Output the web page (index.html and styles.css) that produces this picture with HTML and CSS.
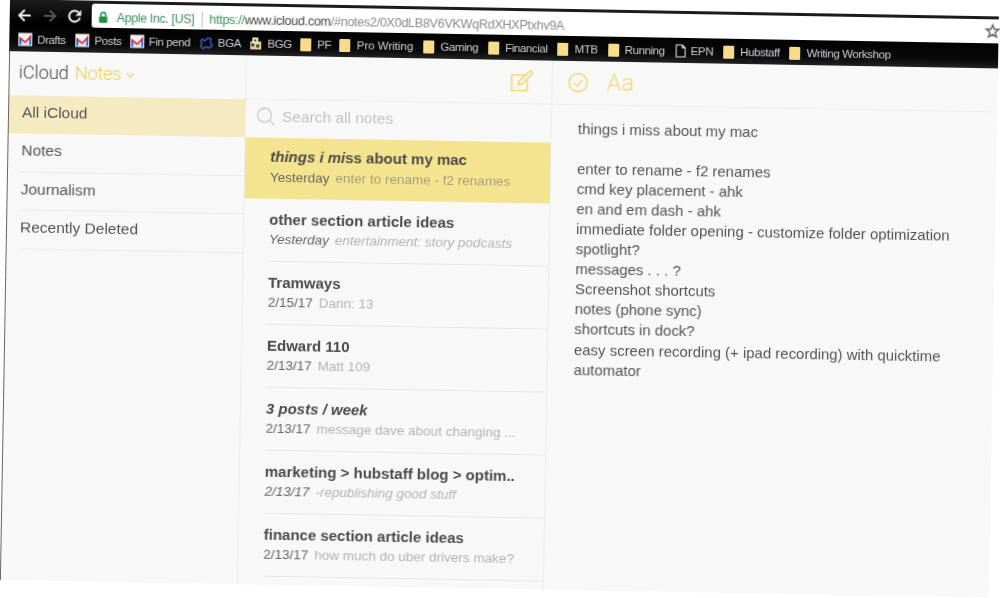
FILE: index.html
```html
<!DOCTYPE html>
<html lang="en">
<head>
<meta charset="utf-8">
<title>iCloud Notes</title>
<link rel="stylesheet" href="styles.css">
</head>
<body>
<div class="window">
  <header class="chrome">
    <div class="toolbar">
      <nav class="navbtns">
        <svg class="nav" viewBox="0 0 16 16"><path d="M14 8H3M8 2.500 2.500 8 8 13.500" fill="none" stroke="#eee" stroke-width="2"/></svg>
        <svg class="nav" viewBox="0 0 16 16"><path d="M2 8h11M8 2.500 13.500 8 8 13.500" fill="none" stroke="#555" stroke-width="2"/></svg>
        <svg class="nav" viewBox="0 0 16 16"><path d="M13.200 9.500A5.500 5.500 0 1 1 11.800 4" fill="none" stroke="#eee" stroke-width="2"/><path d="M14.500 1.500v6h-6z" fill="#eee"/></svg>
      </nav>
      <div class="omnibox">
        <svg class="lock" viewBox="0 0 12 14"><path d="M3.500 6V4a2.500 2.500 0 0 1 5 0v2" fill="none" stroke="#1f8f45" stroke-width="1.600"/><rect x="1.500" y="6" width="9" height="7" rx="1" fill="#1f8f45"/></svg>
        <span class="org">Apple Inc. [US]</span>
        <span class="sep"></span>
        <span class="url"><span class="scheme">https://</span><span class="host">www.icloud.com</span>/#notes2/0X0dLB8V6VKWqRdXHXPtxhv9A</span>
        <svg class="star" viewBox="0 0 16 16"><path d="M8 1.800 9.800 6h4.500l-3.600 3 1.200 4.600L8 11.100l-3.900 2.500L5.300 9 1.700 6h4.500z" fill="none" stroke="#666" stroke-width="1.500"/></svg>
      </div>
    </div>
    <div class="bookmarks">
      <a class="bm"><svg class="gm" viewBox="0 0 15 14"><rect width="15" height="14" fill="#f4f4f4"/><path d="M1 5h2.500v8H1zM11.500 5H14v8h-2.500z" fill="#3f72d8"/><path d="M3.500 7v6h8V7l-4 3z" fill="#dfe4f5"/><path d="M1 4l6.500 5L14 1.500v3L7.500 11 1 6.500z" fill="#e0262b"/></svg><span>Drafts</span></a>
      <a class="bm tight"><svg class="gm" viewBox="0 0 15 14"><rect width="15" height="14" fill="#f4f4f4"/><path d="M1 5h2.500v8H1zM11.500 5H14v8h-2.500z" fill="#3f72d8"/><path d="M3.500 7v6h8V7l-4 3z" fill="#dfe4f5"/><path d="M1 4l6.500 5L14 1.500v3L7.500 11 1 6.500z" fill="#e0262b"/></svg><span>Posts</span></a>
      <a class="bm tight"><svg class="gm" viewBox="0 0 15 14"><rect width="15" height="14" fill="#f4f4f4"/><path d="M1 5h2.500v8H1zM11.500 5H14v8h-2.500z" fill="#3f72d8"/><path d="M3.500 7v6h8V7l-4 3z" fill="#dfe4f5"/><path d="M1 4l6.500 5L14 1.500v3L7.500 11 1 6.500z" fill="#e0262b"/></svg><span>Fin pend</span></a>
      <a class="bm tight"><svg class="gm" viewBox="0 0 15 14"><path d="M3 3.500 6 5l3-3 3.500 1-.5 4 2 3-3 2.500-4-1-3 2L1.500 11 3 8 1.500 5z" fill="none" stroke="#3d5fc4" stroke-width="1.500"/></svg><span>BGA</span></a>
      <a class="bm tight"><svg class="bg" viewBox="0 0 13 14"><rect x="1" y="5" width="11" height="8" fill="#d9cfa0"/><rect x="3" y="1" width="6" height="6" fill="#efe6c0"/><path d="M2 7h3v3H2zM7 8h3v3H7zM5 3h2v2H5z" fill="#4a4636"/></svg><span>BGG</span></a>
      <a class="bm tight"><span class="folder"></span><span>PF</span></a>
      <a class="bm wide"><span class="folder"></span><span>Pro Writing</span></a>
      <a class="bm"><span class="folder"></span><span>Gaming</span></a>
      <a class="bm"><span class="folder"></span><span>Financial</span></a>
      <a class="bm"><span class="folder"></span><span>MTB</span></a>
      <a class="bm"><span class="folder"></span><span>Running</span></a>
      <a class="bm"><svg class="file" viewBox="0 0 11 14"><path d="M1 1h6l3 3v9H1zM7 1v3h3" fill="none" stroke="#ddd" stroke-width="1.100"/></svg><span>EPN</span></a>
      <a class="bm"><span class="folder"></span><span>Hubstaff</span></a>
      <a class="bm"><span class="folder"></span><span>Writing Workshop</span></a>
    </div>
  </header>
  <main class="app">
    <aside class="sidebar">
      <div class="brand"><span class="cloud">iCloud</span><span class="notes">Notes</span><svg class="chev" viewBox="0 0 10 6"><path d="M1 1l4 4 4-4" fill="none" stroke="#f2cf58" stroke-width="1.300"/></svg></div>
      <ul class="folders">
        <li class="folder-row active">All iCloud</li>
        <li class="folder-row">Notes</li>
        <li class="folder-row">Journalism</li>
        <li class="folder-row">Recently Deleted</li>
      </ul>
    </aside>
    <section class="list">
      <div class="list-head">
        <svg class="compose" viewBox="0 0 24 24"><path d="M17 6H2v15.500h15.500V11" fill="none" stroke="#f3d873" stroke-width="1.500"/><path d="M8.500 15.500 9.500 12 20.500 1.500 23 4 12 15z" fill="none" stroke="#f3d873" stroke-width="1.500"/></svg>
      </div>
      <div class="search">
        <svg class="glass" viewBox="0 0 20 20"><circle cx="8.500" cy="8.500" r="7" fill="none" stroke="#c8c8c8" stroke-width="1.300"/><path d="M13.500 13.500 19 19" stroke="#c8c8c8" stroke-width="1.300"/></svg>
        <span>Search all notes</span>
      </div>
      <article class="row selected"><h3 class="title"><em>things i mi</em>ss about my mac</h3><p class="meta"><span class="when">Yesterday</span><span class="peek">enter to rename - f2 renames</span></p></article>
      <article class="row"><h3 class="title">other section article ideas</h3><p class="meta slant"><span class="when">Yesterday</span><span class="peek">entertainment: story podcasts</span></p></article>
      <article class="row"><h3 class="title">Tramways</h3><p class="meta"><span class="when">2/15/17</span><span class="peek">Dann: 13</span></p></article>
      <article class="row"><h3 class="title">Edward 110</h3><p class="meta"><span class="when">2/13/17</span><span class="peek">Matt 109</span></p></article>
      <article class="row"><h3 class="title slant">3 posts / week</h3><p class="meta"><span class="when">2/13/17</span><span class="peek">message dave about changing ...</span></p></article>
      <article class="row"><h3 class="title">marketing &gt; hubstaff blog &gt; optim..</h3><p class="meta slant"><span class="when">2/13/17</span><span class="peek">-republishing good stuff</span></p></article>
      <article class="row"><h3 class="title">finance section article ideas</h3><p class="meta"><span class="when">2/13/17</span><span class="peek">how much do uber drivers make?</span></p></article>
    </section>
    <section class="note">
      <div class="note-head">
        <svg class="check" viewBox="0 0 22 22"><circle cx="11" cy="11" r="9.500" fill="none" stroke="#f3d873" stroke-width="1.500"/><path d="M6.500 11.500 10 14.500 15.500 8" fill="none" stroke="#f3d873" stroke-width="1.500"/></svg>
        <span class="aa">Aa</span>
      </div>
      <div class="body">
        <p>things i miss about my mac</p>
        <p>&nbsp;</p>
        <p>enter to rename - f2 renames</p>
        <p>cmd key placement - ahk</p>
        <p>en and em dash - ahk</p>
        <p>immediate folder opening - customize folder optimization</p>
        <p>spotlight?</p>
        <p>messages . . . ?</p>
        <p>Screenshot shortcuts</p>
        <p>notes (phone sync)</p>
        <p>shortcuts in dock?</p>
        <p>easy screen recording (+ ipad recording) with quicktime</p>
        <p>automator</p>
      </div>
    </section>
  </main>
</div>
</body>
</html>
```

FILE: styles.css
```css
* { box-sizing: border-box; }
html, body { margin: 0; height: 100%; background: #fff; overflow: hidden; }
body { font-family: "Liberation Sans", Arial, sans-serif; }
h3, p, ul { margin: 0; padding: 0; list-style: none; }

.window {
  width: 988.5px;
  height: 581px;
  margin: -1px 0 0 10px;
  transform-origin: -10px 1px;
  transform: rotate(1deg);
  filter: blur(0.45px);
  background: #f8f8f8;
  display: flex;
  flex-direction: column;
  border-left: 1px solid #666;
}

.chrome {
  height: 51.5px;
  margin-left: -1px;
  flex: none;
  background: linear-gradient(#1d1d1d, #000 45%, #0a0a0a 85%, #222);
}
.toolbar { display: flex; height: 27px; padding-top: 3px; }
.navbtns { width: 82px; display: flex; align-items: center; padding: 2px 0 0 7px; gap: 9px; }
.nav { width: 16px; height: 16px; }
.omnibox {
  flex: 1;
  height: 24px;
  background: #fff;
  border-radius: 3px 0 0 3px;
  display: flex;
  align-items: center;
  padding: 3px 0 0 6px;
  font-size: 12.6px;
  letter-spacing: -0.3px;
  color: #8a8a8a;
  white-space: nowrap;
}
.lock { width: 11px; height: 13px; flex: none; }
.org { margin-left: 8px; color: #3c9160; font-size: 12.3px; }
.sep { width: 1px; height: 16px; background: #bbb; margin: 0 7px; }
.scheme { color: #3c9160; }
.host { color: #444; }
.star { width: 16px; height: 16px; margin: -3px -2px 0 auto; flex: none; }

.bookmarks {
  height: 24.5px;
  display: flex;
  align-items: center;
  padding: 1.500px 0 0 9px;
  gap: 10px;
  font-size: 11.5px;
  letter-spacing: -0.4px;
  color: #cfcfd4;
  white-space: nowrap;
}
.bm { display: flex; align-items: center; gap: 5px; }
.tight { margin-right: -1.5px; }
.wide { letter-spacing: 0; }
.gm { width: 14px; height: 14px; }
.bg { width: 13px; height: 14px; }
.file { width: 11px; height: 14px; }
.folder { width: 11px; height: 13px; background: #f7dc8a; border-radius: 1px; margin-right: 1px; }

.app { flex: 1; display: flex; min-height: 0; }
.sidebar { width: 236px; flex: none; color: #555; }
.brand { height: 44px; display: flex; align-items: center; padding: 0 0 1px 9px; font-size: 18.5px; font-family: Roboto, "Liberation Sans", sans-serif; }
.cloud { color: #4a4a4a; font-weight: 300; letter-spacing: -0.2px; }
.notes { color: #f3cf55; margin-left: 6px; font-weight: 300; letter-spacing: -0.4px; }
.chev { width: 9px; height: 6px; margin-left: 5px; margin-top: 2px; }
.folder-row {
  height: 38.5px;
  padding-left: 13px;
  font-size: 15.5px;
  line-height: 34px;
}
.folder-row + .folder-row { background: linear-gradient(#ebebeb, #ebebeb) 13px 100% / 100% 1px no-repeat; }
.active { background: #f6ebc0; }

.list { width: 307px; flex: none; border-left: 1px solid #ececec; border-right: 1px solid #ececec; display: flex; flex-direction: column; overflow: hidden; }
.list-head { height: 44px; display: flex; align-items: center; justify-content: flex-end; padding-right: 18px; border-bottom: 1px solid #eee; flex: none; }
.compose { width: 24px; height: 24px; }
.search { height: 38.5px; flex: none; display: flex; align-items: center; padding: 0 0 3px 10px; gap: 6px; font-size: 15.5px; color: #c4c4c4; }
.glass { width: 20px; height: 20px; }
.row { height: 63px; padding: 11.5px 0 0 25px; background: linear-gradient(#e8e8e8, #e8e8e8) 25px 100% / 100% 1px no-repeat; flex: none; }
.selected { background: #f5e48f; height: 61px; padding-top: 10px; }
.title { font-size: 15px; line-height: 17px; font-weight: 700; color: #4a4a4a; white-space: nowrap; }
.meta { margin-top: 3px; font-size: 13.5px; line-height: 18px; white-space: nowrap; display: flex; gap: 6px; }
.selected .meta { margin-top: 4px; }
.when { color: #666; }
.peek { color: #b3b3b3; }
.selected .peek { color: #a69f7a; }
.slant { font-style: italic; }

.note { flex: 1; min-width: 0; }
.note-head { height: 44px; display: flex; align-items: center; padding-left: 15px; gap: 18px; border-bottom: 1px solid #eee; }
.check { width: 21px; height: 21px; }
.aa { font-family: Roboto, "Liberation Sans", sans-serif; font-weight: 300; font-size: 23.5px; color: #f3d873; }
.body { padding: 14px 0 0 26px; font-size: 14.95px; line-height: 20.1px; color: #555; white-space: nowrap; }
```
